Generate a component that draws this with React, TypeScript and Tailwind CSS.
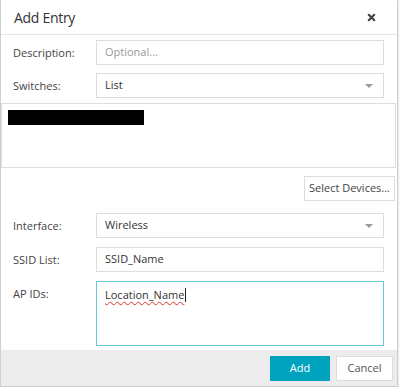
import { X } from 'lucide-react'

const font = { fontFamily: '"Open Sans", "Liberation Sans", sans-serif' }

function Label({ children }: { children: React.ReactNode }) {
  return <div className="w-[83px] shrink-0 text-[11px] leading-[25px] text-[#444]">{children}</div>
}

function Caret() {
  return (
    <svg width="8" height="4" viewBox="0 0 8 4" className="mt-px shrink-0">
      <path d="M0 0h8L4 4z" fill="#999" />
    </svg>
  )
}

function SelectBox({ value }: { value: string }) {
  return (
    <div className="flex h-[25px] flex-1 items-center justify-between border border-[#ddd] bg-white pl-[8px] pr-[10px] text-[11px] text-[#333]">
      <span>{value}</span>
      <Caret />
    </div>
  )
}

function TextBox({ value, placeholder }: { value?: string; placeholder?: string }) {
  return (
    <div className="flex h-[25px] flex-1 items-center border border-[#ddd] bg-white pl-[8px] text-[11px]">
      {value ? <span className="text-[#333]">{value}</span> : <span className="text-[#999]">{placeholder}</span>}
    </div>
  )
}

export default function App() {
  return (
    <div className="h-[387px] w-[400px] bg-white" style={font}>
      <div className="w-[398px] border-x border-b border-[#cfcfcf] bg-white shadow-[0_1px_2px_rgba(0,0,0,0.25)]">
        <div className="flex h-[35px] items-center justify-between border-b border-[#e5e5e5] pl-[13px] pr-[20px]">
          <span className="text-[14px] tracking-[-0.3px] text-[#333]">Add Entry</span>
          <X size={11} strokeWidth={4.5} className="text-[#444]" />
        </div>

        <div className="flex flex-col pl-[12px] pr-[13px] pt-[5px]">
          <div className="flex">
            <Label>Description:</Label>
            <TextBox placeholder="Optional..." />
          </div>
          <div className="mt-[8px] flex">
            <Label>Switches:</Label>
            <SelectBox value="List" />
          </div>
          <div className="-mx-[12px] mt-[5px] h-[65px] border border-[#ddd] pl-[6px] pt-[6px]">
            <div className="h-[15px] w-[136px] bg-black" />
          </div>
          <div className="-mr-[11px] mt-[8px] flex justify-end">
            <button className="h-[25px] w-[91px] border border-[#ddd] bg-white text-[11px] text-[#444]">
              Select Devices...
            </button>
          </div>
          <div className="mt-[12px] flex">
            <Label>Interface:</Label>
            <SelectBox value="Wireless" />
          </div>
          <div className="mt-[9px] flex">
            <Label>SSID List:</Label>
            <TextBox value="SSID_Name" />
          </div>
          <div className="mt-[9px] flex">
            <Label>AP IDs:</Label>
            <div className="h-[65px] flex-1 border border-[#67cadb] bg-white pl-[8px] pt-[3px] text-[11px] text-[#333]">
              <span className="underline decoration-[#e0302a] decoration-wavy decoration-1 underline-offset-2">
                Location_Name
              </span>
              <span className="ml-px inline-block h-[14px] w-px translate-y-[3px] bg-[#222]" />
            </div>
          </div>
        </div>

        <div className="mt-[4px] flex h-[36px] items-center justify-end gap-[6px] bg-[#ececec] pr-[4px]">
          <button className="h-[25px] w-[60px] bg-[#00a3be] text-[11px] text-white">Add</button>
          <button className="h-[25px] w-[57px] border border-[#ddd] bg-white text-[11px] text-[#555]">Cancel</button>
        </div>
      </div>
    </div>
  )
}
